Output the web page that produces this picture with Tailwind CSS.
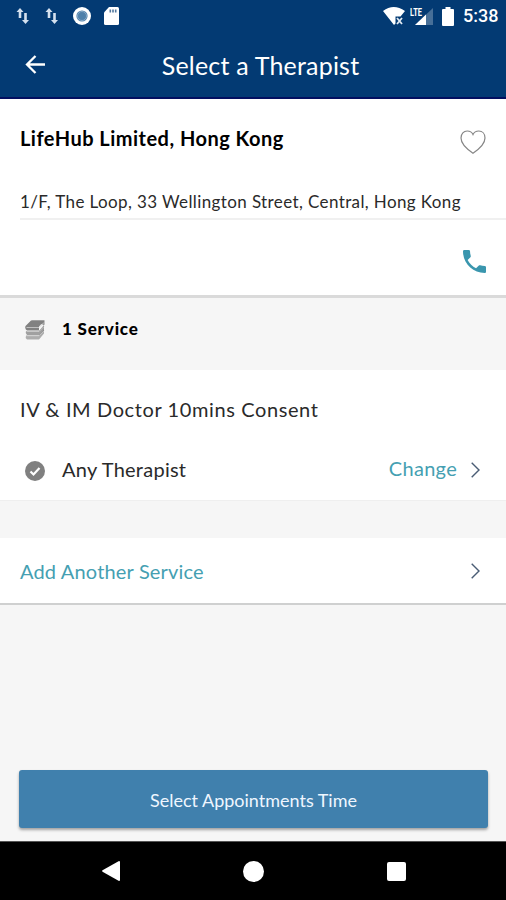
<!DOCTYPE html>
<html lang="en">
<head>
    <meta charset="UTF-8">
    <meta name="viewport" content="width=device-width, initial-scale=1.0">
    <title>Select a Therapist</title>
    <script src="https://cdn.jsdelivr.net/npm/@tailwindcss/browser@4"></script>
</head>
<body class="bg-[#f6f6f6] font-['Lato',sans-serif] text-[#2a2a2a]">
    <div class="flex flex-col h-[900px] w-[506px] overflow-hidden">

        <!-- Status bar and title -->
        <header class="h-[99px] shrink-0 bg-[#033a73] border-b-2 border-[#030f60] text-white">
            <div class="flex h-8 items-center pl-4 pr-[9px]">
                <svg class="w-3.5 h-[18px]" viewBox="0 0 14 18" fill="#d5e1ef"><path d="M4 1 0.500 5H2.700v6h2.600V5H7.500zM9.500 17l3.500-4h-2.200V6H8.200v7H6z"/></svg>
                <svg class="w-3.5 h-[18px] ml-[15px]" viewBox="0 0 14 18" fill="#d5e1ef"><path d="M4 1 0.500 5H2.700v6h2.600V5H7.500zM9.500 17l3.500-4h-2.200V6H8.200v7H6z"/></svg>
                <svg class="size-[18px] ml-[14px]" viewBox="0 0 18 18"><circle cx="9" cy="9" r="9" fill="#fff"/><circle cx="9" cy="9" r="5.600" fill="#4f81ab"/><circle cx="9" cy="9" r="4.500" fill="none" stroke="#86a9c7"/></svg>
                <svg class="w-[15px] h-[18px] ml-[13px]" viewBox="0 0 15 18"><path d="M5 0h8.500Q15 0 15 1.500v15q0 1.500-1.500 1.500h-12Q0 18 0 16.500V5.500z" fill="#fff"/><path d="M5.500 2.500h1.600v3H5.500zM8.200 2.500h1.600v3H8.200zM10.900 2.500h1.600v3h-1.600z" fill="#52789e"/></svg>
                <div class="flex items-center ml-auto">
                    <svg class="w-[22px] h-[18px]" viewBox="0 0 22 18"><path d="M0 4Q10.500-4 22 4l-4.500 5.500H12.500v7L11 18z" fill="#fff"/><path d="m14 11 5 6m0-6-5 6" stroke="#e2eaf2" stroke-width="1.800"/></svg>
                    <svg class="w-6 h-[18px] ml-[5px]" viewBox="0 0 24 18"><path d="M5 18 23 1v17z" fill="#476f98"/><path d="M5 18 16 7.600V18z" fill="#fff"/><text x="0" y="8.500" font-family="Roboto" font-size="10" font-weight="700" textLength="12" lengthAdjust="spacingAndGlyphs" fill="#fff">LTE</text></svg>
                    <svg class="w-3 h-[19px] ml-[8px]" viewBox="0 0 12 19"><path d="M3.500 0h5v2H11q1 0 1 1v15q0 1-1 1H1q-1 0-1-1V3q0-1 1-1h2.500z" fill="#fff"/></svg>
                    <span class="ml-[9px] w-[34px] whitespace-nowrap font-['Roboto',sans-serif] text-[18px] font-medium leading-none">5:38</span>
                </div>
            </div>
            <div class="relative flex h-[65px] items-center justify-center pl-[15px] pt-0.5">
                <svg class="absolute left-[25px] top-[23px] w-5 h-[19px]" viewBox="0 0 20 19" fill="none" stroke="#fff" stroke-width="2.300"><path d="M10.500 1 2 9.500l8.500 8.500M2 9.500h18"/></svg>
                <h1 class="text-[25px] leading-none tracking-[0.2px]">Select a Therapist</h1>
            </div>
        </header>

        <!-- Clinic -->
        <section class="h-[199px] shrink-0 bg-white border-b-[3px] border-[#dadada]">
            <div class="flex h-[78px] items-center justify-between pl-5 pr-5">
                <h2 class="text-[20px] font-bold leading-none tracking-[0.48px] text-black">LifeHub Limited, Hong Kong</h2>
                <svg class="w-[26px] h-6 mt-2" viewBox="0 0 26 24" fill="none" stroke="#858585" stroke-width="1.200"><path d="M13 23.200C9 20.500 1 14.500 1 8 1 3.500 3.800 1 7.200 1 9.800 1 12 2.300 13 4.600 14 2.300 16.200 1 18.800 1 22.200 1 25 3.500 25 8c0 6.500-8 12.500-12 15.200z"/></svg>
            </div>
            <div class="ml-5 flex h-[43px] items-center border-b-2 border-[#f0f0f0] pt-[7px]">
                <p class="whitespace-nowrap text-[17px] leading-none tracking-[0.39px]">1/F, The Loop, 33 Wellington Street, Central, Hong Kong</p>
            </div>
            <div class="flex h-[75px] items-center justify-end pr-5 pt-[7px]">
                <svg class="w-[23px] h-[23px]" viewBox="3 3 18 18" fill="#3a96ae"><path d="M6.620 10.790c1.440 2.830 3.760 5.140 6.590 6.590l2.200-2.200c.27-.27.67-.36 1.020-.24 1.120.37 2.330.57 3.570.57.55 0 1 .45 1 1V20c0 .55-.45 1-1 1-9.390 0-17-7.610-17-17 0-.55.45-1 1-1h3.500c.55 0 1 .45 1 1 0 1.250.2 2.450.57 3.570.11.35.03.74-.25 1.020z"/></svg>
            </div>
        </section>

        <!-- Services -->
        <div class="flex h-[72px] shrink-0 items-center pb-[12px] pl-[25px]">
            <svg class="w-5 h-5 mt-1" viewBox="0 0 20 20"><path d="M6 .5h13.500v4L14 11v7l5-6V5" fill="#858585"/><path d="M1 15.500 14 15.500 19 10.500v3L14 19.500H2q-2-2-1-4z" fill="#adadad"/><path d="M1 11h13l5-5v3.500L14 15H2q-2-2-1-4z" fill="#a0a0a0"/><path d="M.5 6 6 .5h13.500L14 6.500v4H2Q-.5 9 .5 6z" fill="#818181"/><path d="M1.500 7.500H14l5-5M1.500 11.500H14l5-5M1.500 15.800H14l5-5" fill="none" stroke="#d0d0d0" stroke-width=".8"/></svg>
            <h3 class="ml-[17px] text-[17px] font-black leading-none tracking-[0.8px] text-black">1 Service</h3>
        </div>
        <section class="h-[131px] shrink-0 bg-white border-b border-[#efefef]">
            <p class="flex h-[81px] items-center pb-[3px] pl-5 text-[20px] leading-none tracking-[0.6px]">IV &amp; IM Doctor 10mins Consent</p>
            <div class="flex h-[38px] items-center pl-[25px] pr-[26px]">
                <svg class="size-5 mt-px" viewBox="0 0 20 20"><circle cx="10" cy="10" r="10" fill="#808080"/><path d="m5.500 10.500 3 3 6-6.500" fill="none" stroke="#fff" stroke-width="2.200"/></svg>
                <span class="ml-[17px] pb-0.5 text-[20px] leading-none tracking-[0.25px]">Any Therapist</span>
                <span class="ml-auto pb-1 text-[20px] leading-none tracking-[0.3px] text-[#459fb2]">Change</span>
                <svg class="ml-[14px] w-[9px] h-4" viewBox="0 0 9 16" fill="none" stroke="#4a5d75" stroke-width="1.400"><path d="m.7.7 7.300 7.300-7.300 7.300"/></svg>
            </div>
        </section>
        <section class="mt-[37px] flex h-[67px] shrink-0 items-center justify-between bg-white border-b-2 border-[#cfd0d0] pl-5 pr-[26px]">
            <a class="text-[20px] leading-none tracking-[0.17px] text-[#459fb2]">Add Another Service</a>
            <svg class="w-[9px] h-4" viewBox="0 0 9 16" fill="none" stroke="#4a5d75" stroke-width="1.400"><path d="m.7.7 7.300 7.300-7.300 7.300"/></svg>
        </section>

        <button class="ml-[19px] mr-[18px] mt-auto mb-[13px] h-[58px] shrink-0 rounded-[3px] bg-[#4080ad] pt-0.5 text-[18px] leading-none text-[#eff6ff] shadow-[0_2px_3px_rgba(0,0,0,0.35)]">Select Appointments Time</button>

        <!-- Android navigation -->
        <nav class="flex h-[59px] shrink-0 items-center bg-black border-t border-[#555] pl-[102px]">
            <svg class="w-[18px] h-5" viewBox="0 0 18 20" fill="#fff"><path d="M17 0q1 0 1 1v18q0 1-1 1L.5 10.700q-.7-.7 0-1.400z"/></svg>
            <div class="ml-[123px] size-[21px] rounded-full bg-white"></div>
            <div class="ml-[123px] size-[19px] rounded-[2px] bg-white"></div>
        </nav>
    </div>
</body>
</html>
